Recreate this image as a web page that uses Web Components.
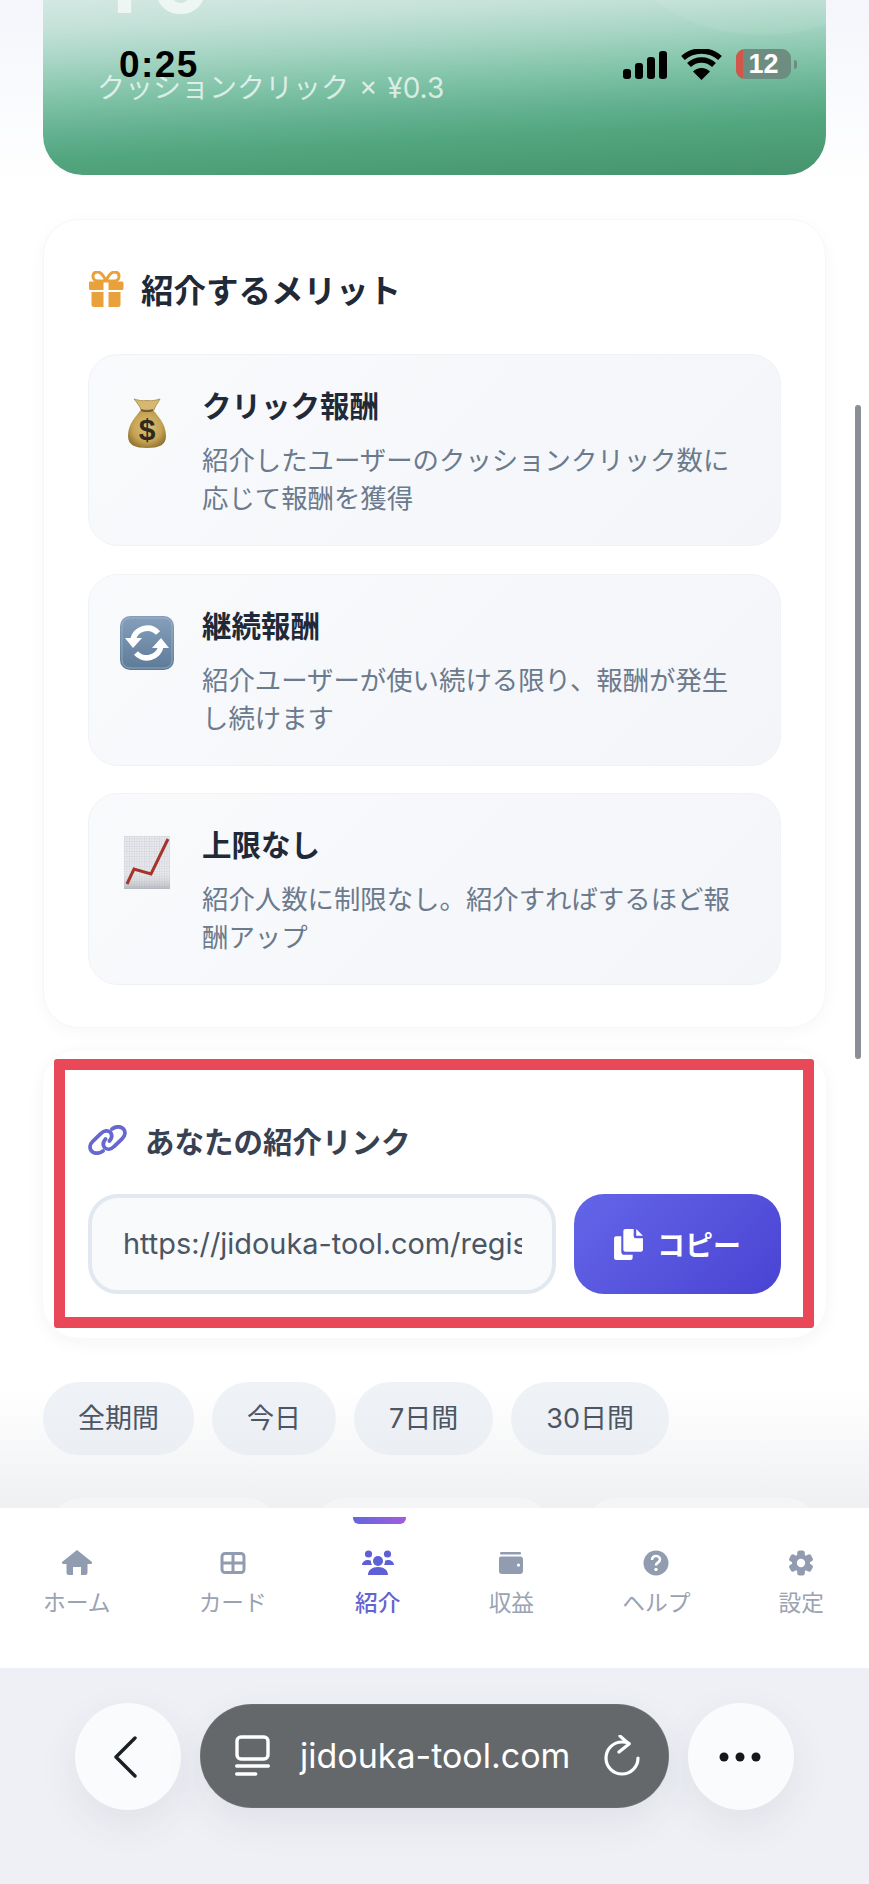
<!DOCTYPE html>
<html lang="ja">
<head>
<meta charset="utf-8">
<title>紹介</title>
<style>
  html, body { margin: 0; padding: 0; background: #fff; }
  body { font-family: Inter, "Noto Sans CJK JP", sans-serif; }
</style>
</head>
<body>
<app-page>
  <status-bar slot="overlay"></status-bar>
  <hero-banner amount="¥0" note="クッションクリック × ¥0.3"></hero-banner>
  <benefit-card heading="紹介するメリット">
    <benefit-item icon="bag" heading="クリック報酬">紹介したユーザーのクッションクリック数に応じて報酬を獲得</benefit-item>
    <benefit-item icon="cycle" heading="継続報酬">紹介ユーザーが使い続ける限り、報酬が発生し続けます</benefit-item>
    <benefit-item icon="chart" heading="上限なし">紹介人数に制限なし。紹介すればするほど報酬アップ</benefit-item>
  </benefit-card>
  <referral-link url="https://jidouka-tool.com/register?ref=a8f3c2"></referral-link>
  <period-chips></period-chips>
  <stat-peek></stat-peek>
  <bottom-nav slot="footer"></bottom-nav>
  <browser-bar slot="footer" host="jidouka-tool.com"></browser-bar>
</app-page>

<script>
/* ── Shell: scrolling area, footer bars and things lying on top ── */
class AppPage extends HTMLElement {
  constructor() {
    super();
    this.attachShadow({ mode: "open" }).innerHTML = `
      <style>
        :host { display: flex; flex-direction: column; position: relative; width: 869px; height: 1884px; overflow: hidden; }
        .scroll {
          height: 1508px; overflow: hidden; flex: none;
          background: linear-gradient(#f4f6fb 0, #fff 190px, #fff 1390px, #eff0f2 1508px);
        }
        .thumb { position: absolute; left: 855px; top: 405px; width: 6px; height: 654px; border-radius: 3px; background: #8a8f96; }
      </style>
      <div class="scroll"><slot></slot></div>
      <slot name="footer"></slot>
      <slot name="overlay"></slot>
      <div class="thumb"></div>`;
  }
}

class StatusBar extends HTMLElement {
  constructor() {
    super();
    this.attachShadow({ mode: "open" }).innerHTML = `
      <style>
        :host { position: absolute; left: 0; top: 46px; width: 869px; height: 38px; display: block; }
        .time { position: absolute; left: 119px; top: 0; font: 700 37px/38px "Liberation Sans", sans-serif; color: #000; letter-spacing: 1.400px; }
        svg { position: absolute; top: 3px; left: 620px; }
        .bat { position: absolute; left: 736px; top: 3px; width: 55px; height: 30px; border-radius: 9px; overflow: hidden; background: #6c8d80; display: flex; }
        .bat i { width: 7px; background: #d2564a; }
        .bat span { flex: 1; text-align: center; margin-right: 7px; font: 700 27px/30px "Liberation Sans", sans-serif; color: #fff; }
        .nub { position: absolute; left: 794px; top: 14px; width: 3px; height: 9px; border-radius: 0 3px 3px 0; background: #6c8d80; }
      </style>
      <span class="time">0:25</span>
      <svg width="104" height="32" viewBox="0 0 104 32">
        <rect x="3" y="20" width="8" height="10" rx="3"/>
        <rect x="15" y="14" width="8" height="16" rx="3"/>
        <rect x="27" y="8" width="8" height="22" rx="3"/>
        <rect x="39" y="2" width="8" height="28" rx="3"/>
        <g transform="translate(-2 0)">
          <path d="M65 9a28 28 0 0 1 37 0" fill="none" stroke="#000" stroke-width="5.500"/>
          <path d="M71 16a18 18 0 0 1 25 0" fill="none" stroke="#000" stroke-width="5.500"/>
          <path d="M83.500 31 75 22.500a12 12 0 0 1 17 0z"/>
        </g>
      </svg>
      <div class="bat"><i></i><span>12</span></div>
      <div class="nub"></div>`;
  }
}

class HeroBanner extends HTMLElement {
  constructor() { super(); this.attachShadow({ mode: "open" }); }
  connectedCallback() {
    this.shadowRoot.innerHTML = `
      <style>
        :host { display: block; margin: 0 43px; height: 175px; position: relative; overflow: hidden; border-radius: 0 0 40px 40px;
          background: linear-gradient(177deg, #d3e8e2 0, #c4e1d8 30px, #a9d6c6 60px, #80c3a8 100px, #62b08f 135px, #52a67e 160px, #45936d 216px); }
        .glow { position: absolute; left: 570px; top: -190px; width: 300px; height: 225px; border-radius: 50%; background: rgba(255,255,255,.07); }
        .amount { position: absolute; left: 56px; top: -67px; font: 700 90px/96px Inter, sans-serif; color: #eef6f4; }
        .note { position: absolute; left: 54px; top: 71px; font: 400 28px/34px Inter, "Noto Sans CJK JP", sans-serif; word-spacing: 2px; color: rgba(255,255,255,.72); white-space: nowrap; }
      </style>
      <div class="glow"></div>
      <div class="amount">${this.getAttribute("amount")}</div>
      <div class="note">${this.getAttribute("note")}</div>`;
  }
}

class BenefitCard extends HTMLElement {
  constructor() { super(); this.attachShadow({ mode: "open" }); }
  connectedCallback() {
    this.shadowRoot.innerHTML = `
      <style>
        :host { display: block; box-sizing: border-box; margin: 44px 43px 0; height: 809px; padding: 42px 45px 0; background: #fff;
          border: 1px solid #f7f7f9; border-radius: 36px; box-shadow: 0 4px 18px rgba(30,40,70,.035); }
        h2 { display: flex; align-items: center; gap: 17px; height: 54px; margin: 0 0 38px -1px; font: 700 32.500px/54px "Noto Sans CJK JP", sans-serif; color: #1f2937; }
        .list { display: flex; flex-direction: column; gap: 27.500px; margin: 0 -1px; }
        svg { flex: none; }
      </style>
      <h2>
        <svg width="36" height="36" viewBox="0 0 36 36" fill="#e9a23b">
          <path d="M2 10.500h13.500v8.500H2a1.500 1.500 0 0 1-1-1.500v-6a1.500 1.500 0 0 1 1-1zM20.500 10.500H34a1.500 1.500 0 0 1 1.500 1.500v5.500A1.500 1.500 0 0 1 34 19H20.500zM3.500 21h12v15H6a2.500 2.500 0 0 1-2.500-2.500zM20.500 21h12v12.500A2.500 2.500 0 0 1 30 36h-9.500z"/>
          <path d="M18 10C15 3 12 1 9.500 1 6.500 1 5 3 5 5.500S7 10 9.500 10zM18 10c3-7 6-9 8.500-9 3 0 4.500 2 4.500 4.500S29 10 26.500 10z" fill="none" stroke="#e9a23b" stroke-width="3"/>
        </svg>
        ${this.getAttribute("heading")}
      </h2>
      <div class="list"><slot></slot></div>`;
  }
}

class BenefitItem extends HTMLElement {
  static icons = {
    bag: `<svg width="38" height="52" viewBox="0 0 38 52">
        <defs><radialGradient id="b" cx=".5" cy=".45" r=".6"><stop offset="0" stop-color="#dcc27c"/><stop offset=".65" stop-color="#c4a252"/><stop offset="1" stop-color="#8f7030"/></radialGradient></defs>
        <path d="M6 2c5 1.500 8 2 13 1.500 5 .5 8 0 13-1.500-2 4-5 7-6 11H13C12 9 9 6 6 2z" fill="#d6b873" stroke="#a78540" stroke-width=".8"/>
        <path d="M13 13c4 1.500 8 1.500 12 0 5 6 13 14 13 26 0 9-7 12-19 12S0 48 0 39c0-12 8-20 13-26z" fill="url(#b)"/>
        <path d="M13 13c4 1.500 8 1.500 12 0" stroke="#6e5423" stroke-width="1.500" fill="none"/>
        <text x="19" y="43" text-anchor="middle" font-family="Liberation Sans, sans-serif" font-size="30" font-weight="700" fill="#2f2a1c">$</text>
      </svg>`,
    cycle: `<svg width="54" height="54" viewBox="0 0 54 54">
        <defs><linearGradient id="c" x1="0" y1="0" x2="0" y2="1"><stop offset="0" stop-color="#86a0bb"/><stop offset="1" stop-color="#5d7a99"/></linearGradient></defs>
        <rect width="54" height="54" rx="10" fill="url(#c)"/>
        <rect x="2" y="2" width="50" height="50" rx="8" fill="none" stroke="#adbfd0" stroke-width="1" opacity=".6"/>
        <path d="M38 17A14.500 14.500 0 0 0 13 24" fill="none" stroke="#fff" stroke-width="5.500"/>
        <path d="M16 37A14.500 14.500 0 0 0 41 30" fill="none" stroke="#fff" stroke-width="5.500"/>
        <path d="M5 22h17l-9 10zM49 32H32l9-10z" fill="#fff"/>
      </svg>`,
    chart: `<svg width="46" height="53" viewBox="0 0 46 53">
        <defs><pattern id="g" width="2.500" height="2.500" patternUnits="userSpaceOnUse"><rect width="2.500" height="2.500" fill="#e9eaee"/><path d="M0 0h2.500M0 0v2.500" stroke="#bfc4cd" stroke-width=".6"/></pattern>
        <linearGradient id="s" x1="0" y1="0" x2="0" y2="1"><stop offset=".6" stop-color="#fff" stop-opacity="0"/><stop offset="1" stop-color="#8b8f96" stop-opacity=".5"/></linearGradient></defs>
        <rect width="46" height="53" fill="url(#g)"/>
        <rect width="46" height="53" fill="url(#s)"/>
        <path d="M3 48l7-15 17 5L44 3" fill="none" stroke="#a5342c" stroke-width="3"/>
      </svg>`
  };
  constructor() { super(); this.attachShadow({ mode: "open" }); }
  connectedCallback() {
    this.shadowRoot.innerHTML = `
      <style>
        :host { display: flex; box-sizing: border-box; height: 192px; padding: 32px 32px 0 29px; gap: 26px;
          background: linear-gradient(135deg, #f8fafc, #f3f5f9); border: 1px solid #f0f2f6; border-radius: 30px; }
        .ic { flex: none; width: 58px; height: 72px; display: flex; align-items: center; justify-content: center; }
        h3 { margin: -1px 0 18px; font: 700 29.500px/36px "Noto Sans CJK JP", sans-serif; color: #1f2937; }
        p { margin: 0; font: 400 26.400px/38px "Noto Sans CJK JP", sans-serif; color: #6b7a8c; }
      </style>
      <div class="ic">${BenefitItem.icons[this.getAttribute("icon")]}</div>
      <div>
        <h3>${this.getAttribute("heading")}</h3>
        <p><slot></slot></p>
      </div>`;
  }
}

class ReferralLink extends HTMLElement {
  constructor() { super(); this.attachShadow({ mode: "open" }); }
  connectedCallback() {
    this.shadowRoot.innerHTML = `
      <style>
        :host { display: block; box-sizing: border-box; position: relative; margin: 22px 43px 0; height: 288px; padding: 68px 45px 0;
          background: #fff; border-radius: 36px; box-shadow: 0 4px 18px rgba(30,40,70,.05); }
        h2 { display: flex; align-items: center; gap: 18px; height: 44px; margin: 0 0 32px; font: 700 29.500px/44px "Noto Sans CJK JP", sans-serif; color: #374151; }
        h2 svg { flex: none; }
        .row { display: flex; gap: 18px; height: 100px; }
        .url { flex: 1; min-width: 0; box-sizing: border-box; padding: 0 30px 0 31px; display: flex; align-items: center; border: 4px solid #e2e8f0; border-radius: 30px; background: #f8fafc; }
        .url span { display: block; overflow: hidden; white-space: nowrap; font: 400 28.900px/40px Inter, sans-serif; color: #4b5563; }
        button { flex: none; width: 207px; border: 0; border-radius: 30px; background: linear-gradient(135deg, #6366e8, #4a43d3); color: #fff; display: flex; align-items: center; justify-content: center; gap: 13px; font: 600 28px/36px "Noto Sans CJK JP", sans-serif; padding: 0 1px 0 0; }
        .mark { position: absolute; left: 11px; top: 9px; right: 12px; height: 269px; box-sizing: border-box; border: 11px solid #e94858; border-radius: 3px; }
      </style>
      <h2>
        <svg width="39" height="30" viewBox="0 0 39 30" fill="none" stroke="#6668cf" stroke-width="3.800" stroke-linecap="round">
          <path d="M15 26C11 29 6 29 3.500 26 1 23 2 19 5 16L13 8.500C16 5.500 20 5 22.500 7.500 24.500 10 24 13 21.500 16"/>
          <path d="M24 4C28 1 33 1 35.500 4 38 7 37 11 34 14L26 21.500C23 24.500 19 25 16.500 22.500 14.500 20 15 17 17.500 14"/>
        </svg>
        あなたの紹介リンク
      </h2>
      <div class="row">
        <div class="url"><span>${this.getAttribute("url")}</span></div>
        <button>
          <svg width="31" height="32" viewBox="0 0 30 31" fill="#fff">
            <path d="M12 1h8v7a2 2 0 0 0 2 2h7v11a2 2 0 0 1-2 2H12a2 2 0 0 1-2-2V3a2 2 0 0 1 2-2zM22.500 1l6.500 6.500h-6.500z"/>
            <path d="M8 8v15a3 3 0 0 0 3 3h8v3a2 2 0 0 1-2 2H3a2 2 0 0 1-2-2V10a2 2 0 0 1 2-2z"/>
          </svg>
          コピー
        </button>
      </div>
      <div class="mark"></div>`;
  }
}

class PeriodChips extends HTMLElement {
  constructor() {
    super();
    var labels = ["全期間", "今日", "7日間", "30日間"];
    this.attachShadow({ mode: "open" }).innerHTML = `
      <style>
        :host { display: flex; gap: 18px; margin: 44px 0 0 43px; }
        span { display: block; height: 73px; padding: 0 35px; border-radius: 37px; background: linear-gradient(#eff2f6, #ebeef2); font: 400 27px/73px Inter, "Noto Sans CJK JP", sans-serif; color: #4b5563; }
      </style>
      ${labels.map(function (l) { return "<span>" + l + "</span>"; }).join("")}`;
  }
}

class StatPeek extends HTMLElement {
  constructor() {
    super();
    this.attachShadow({ mode: "open" }).innerHTML = `
      <style>
        :host { display: flex; margin: 43px 54px 0 53px; justify-content: space-between; height: 30px; }
        div { width: 222px; height: 30px; border-radius: 26px 26px 0 0; background: #f5f5f7; box-shadow: 0 -1px 3px rgba(0,0,0,.01); }
      </style>
      <div></div><div style="width:230px"></div><div style="width:227px"></div>`;
  }
}

class BottomNav extends HTMLElement {
  constructor() {
    super();
    var items = [
      ["ホーム", `<path d="M16 0 31 12Q31.500 14 29 14H26.500V22.500Q26.500 25 24 25H20V17H12V25H8Q5.500 25 5.500 22.500V14H3Q.5 14 1 12Z"/>`],
      ["カード", `<g fill="none" stroke="currentColor" stroke-width="3"><rect x="5" y="3.500" width="22" height="19" rx="3"/><path d="M16 4V22M6 13H26"/></g>`],
      ["紹介", `<circle cx="6.500" cy="4" r="3.600"/><circle cx="25.500" cy="4" r="3.600"/><circle cx="16" cy="11" r="5"/><path d="M0 15c0-3 3-5 6-5 1 0 2 .3 3 .8-.2 1.500.3 3 1 4.200zM32 15c0-3-3-5-6-5-1 0-2 .3-3 .8.2 1.500-.3 3-1 4.200zM6 25c0-5 4-8 10-8s10 3 10 8z"/>`],
      ["収益", `<rect x="5" y="2" width="21" height="2.500" rx="1.250"/><path fill-rule="evenodd" d="M4 8.500Q4 6.500 6 6.500H25Q28 6.500 28 9.500V21Q28 24 25 24H7Q4 24 4 21zM23.500 13.500a1.600 1.600 0 1 0 0 3.200 1.600 1.600 0 0 0 0-3.200z"/>`],
      ["ヘルプ", `<circle cx="16" cy="13" r="12.500"/><path d="M12 10c0-2.500 2-4 4-4s4 1.500 4 3.500-2 3-3 3.800-1 1.200-1 2.200" fill="none" stroke="#fff" stroke-width="2.600"/><circle cx="16" cy="19.500" r="1.700" fill="#fff"/>`],
      ["設定", `<g transform="translate(16 13)"><rect x="-3.800" y="-12.500" width="7.600" height="25" rx="2.500"/><rect x="-3.800" y="-12.500" width="7.600" height="25" rx="2.500" transform="rotate(60)"/><rect x="-3.800" y="-12.500" width="7.600" height="25" rx="2.500" transform="rotate(120)"/><circle r="9"/><circle r="4.200" fill="#fff"/></g>`]
    ];
    this.attachShadow({ mode: "open" }).innerHTML = `
      <style>
        :host { display: flex; justify-content: space-between; position: relative; box-sizing: border-box; height: 160px; padding: 42px 45px 0 43px; background: #fff; }
        a { display: flex; flex-direction: column; align-items: center; font: 400 22.700px/34px "Noto Sans CJK JP", sans-serif; color: #9aa3b2; }
        a.on { color: #6563d2; font-weight: 500; }
        svg { display: block; height: 26px; width: 32px; margin-bottom: 9px; fill: currentColor; color: #919cb1; }
        a.on svg { color: #5f60d6; }
        .bar { position: absolute; left: 353px; top: 9px; width: 53px; height: 7px; border-radius: 0 0 6px 6px; background: linear-gradient(90deg, #6366e0, #a25ddc); }
      </style>
      <div class="bar"></div>
      ${items.map(function (it) {
        return `<a class="${it[0] === "紹介" ? "on" : ""}"><svg viewBox="0 0 32 26">${it[1]}</svg>${it[0]}</a>`;
      }).join("")}`;
  }
}

class BrowserBar extends HTMLElement {
  constructor() { super(); this.attachShadow({ mode: "open" }); }
  connectedCallback() {
    this.shadowRoot.innerHTML = `
      <style>
        :host { display: flex; align-items: flex-start; box-sizing: border-box; height: 216px; padding: 35px 75px 0 75px; gap: 19px; background: #eef0f5; }
        .round { flex: none; width: 106px; height: 107px; border-radius: 50%; background: #f9fbfd; box-shadow: 0 14px 40px rgba(60,70,90,.08); display: flex; align-items: center; justify-content: center; }
        .pill { flex: 1; box-sizing: border-box; height: 104px; margin-top: 1px; border-radius: 52px; background: #65686b; box-shadow: 0 14px 40px rgba(60,70,90,.08), inset 0 0 1px #aaa; display: flex; align-items: center; padding: 0 29px 0 35px; color: #fff; font: 400 34px/44px Inter, sans-serif; }
        .host { margin-left: 30px; flex: 1; white-space: nowrap; }
      </style>
      <div class="round">
        <svg width="24" height="42" viewBox="0 0 24 42" fill="none" stroke="#1b1f24" stroke-width="3.400" stroke-linecap="round" stroke-linejoin="round" style="margin-right:7px"><path d="M22 2 3 21l19 19"/></svg>
      </div>
      <div class="pill">
        <svg width="35" height="42" viewBox="0 0 35 42" fill="none" stroke="#fff" stroke-width="3.400" stroke-linecap="round"><rect x="2" y="2" width="31" height="22" rx="4"/><path d="M1.700 31h31.600M1.700 39h19"/></svg>
        <span class="host">${this.getAttribute("host")}</span>
        <svg width="36" height="42" viewBox="0 0 36 42" fill="none" stroke="#fff" stroke-width="3.200" stroke-linecap="round" stroke-linejoin="round"><path d="M25 8.500c-2-.9-4.500-1.500-7-1.500a16 16 0 1 0 16 16"/><path d="M16 1l9 8-10 8"/></svg>
      </div>
      <div class="round">
        <svg width="44" height="12" viewBox="0 0 44 12" fill="#14181d" style="margin-right:3px"><circle cx="6" cy="6" r="4.500"/><circle cx="22" cy="6" r="4.500"/><circle cx="38" cy="6" r="4.500"/></svg>
      </div>`;
  }
}

customElements.define("app-page", AppPage);
customElements.define("status-bar", StatusBar);
customElements.define("hero-banner", HeroBanner);
customElements.define("benefit-card", BenefitCard);
customElements.define("benefit-item", BenefitItem);
customElements.define("referral-link", ReferralLink);
customElements.define("period-chips", PeriodChips);
customElements.define("stat-peek", StatPeek);
customElements.define("bottom-nav", BottomNav);
customElements.define("browser-bar", BrowserBar);
</script>
</body>
</html>
